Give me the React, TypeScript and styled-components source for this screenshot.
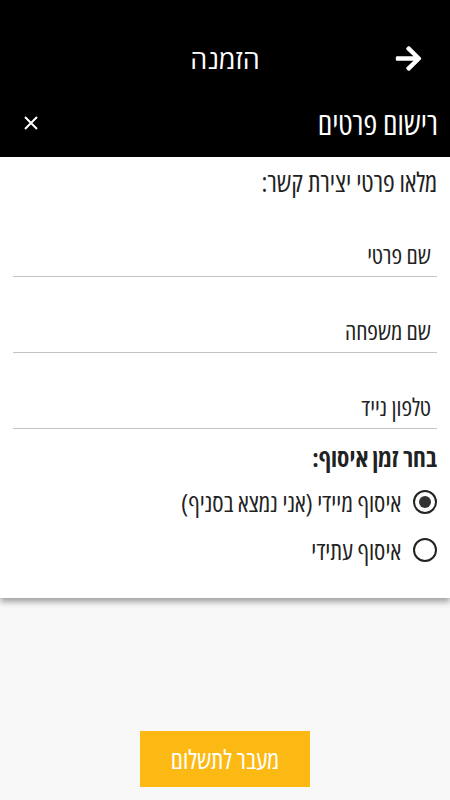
import React, { useState } from "react";
import styled, { createGlobalStyle } from "styled-components";
import { FaArrowRight } from "react-icons/fa";

const Global = createGlobalStyle`
  html, body { margin: 0; padding: 0; background: #f8f8f8; }
  body { font-family: "Open Sans", "DejaVu Sans", sans-serif; font-stretch: 75%; }
  * { box-sizing: border-box; }
`;

const Page = styled.div`
  direction: rtl;
  width: 450px;
  height: 800px;
  display: flex;
  flex-direction: column;
  background: #f8f8f8;
`;

const Header = styled.header`
  background: #000;
  color: #fff;
  height: 157px;
  display: flex;
  flex-direction: column;
`;

const TopBar = styled.div`
  height: 110px;
  display: grid;
  grid-template-columns: 84px 1fr 84px;
  align-items: center;
  padding-top: 12px;
`;

const Title = styled.h1`
  margin: 0;
  font-size: 27px;
  line-height: 32px;
  font-stretch: 100%;
  font-weight: 400;
  text-align: center;
`;

const IconButton = styled.button`
  background: none;
  border: none;
  color: #fff;
  padding: 0;
  display: flex;
  align-items: center;
  justify-content: center;
  cursor: pointer;
`;

const SubBar = styled.div`
  flex: 1;
  display: flex;
  align-items: center;
  justify-content: space-between;
  padding: 0 12px 16px 23px;
`;

const SubTitle = styled.h2`
  margin: 0;
  font-size: 31px;
  line-height: 36px;
  font-weight: 400;
`;

const Card = styled.section`
  background: #fff;
  padding: 14px 13px 24px 13px;
  box-shadow: 0 4px 6px rgba(0, 0, 0, 0.35);
  position: relative;
`;

const Lead = styled.p`
  margin: 0 0 46px;
  font-size: 26.5px;
  line-height: 22px;
  color: #222;
`;

const Field = styled.input`
  display: block;
  width: 100%;
  border: none;
  border-bottom: 1px solid #c4c4c4;
  font-family: inherit;
  font-stretch: 75%;
  font-size: 24px;
  color: #222;
  padding: 0 6px 7px;
  margin-bottom: 38px;
  height: 38px;
  outline: none;
  background: transparent;
  direction: rtl;
  &::placeholder { color: #222; opacity: 1; }
  &:last-of-type { margin-bottom: 0; }
`;

const Section = styled.div`
  margin-top: 15px;
`;

const SectionTitle = styled.h3`
  margin: 0 0 8px;
  font-size: 25px;
  line-height: 26px;
  font-weight: 700;
  color: #222;
`;

const RadioRow = styled.label`
  display: flex;
  align-items: center;
  gap: 12px;
  height: 48px;
  font-size: 25px;
  color: #222;
  cursor: pointer;
`;

const RadioCircle = styled.span<{ $checked: boolean }>`
  flex: none;
  width: 24px;
  height: 24px;
  border-radius: 50%;
  border: 2px solid #222;
  display: flex;
  align-items: center;
  justify-content: center;
  &::after {
    content: "";
    width: 12px;
    height: 12px;
    border-radius: 50%;
    background: #333;
    display: ${(p) => (p.$checked ? "block" : "none")};
  }
`;

const Footer = styled.div`
  flex: 1;
  display: flex;
  align-items: flex-end;
  justify-content: center;
  padding-bottom: 13px;
`;

const PayButton = styled.button`
  width: 170px;
  height: 56px;
  background: #fdb913;
  color: #fff;
  border: none;
  font-family: inherit;
  font-stretch: 75%;
  font-size: 26px;
  cursor: pointer;
`;

export default function App() {
  const [pickup, setPickup] = useState("now");
  const options = [
    { id: "now", label: "איסוף מיידי (אני נמצא בסניף)" },
    { id: "later", label: "איסוף עתידי" },
  ];
  return (
    <Page>
      <Global />
      <Header>
        <TopBar>
          <IconButton aria-label="חזרה">
            <FaArrowRight size={29} />
          </IconButton>
          <Title>הזמנה</Title>
          <span />
        </TopBar>
        <SubBar>
          <SubTitle>רישום פרטים</SubTitle>
          <IconButton aria-label="סגור">
            <svg width="16" height="16" viewBox="0 0 16 16">
              <path d="M2 2 L14 14 M14 2 L2 14" stroke="#fff" strokeWidth="2" />
            </svg>
          </IconButton>
        </SubBar>
      </Header>
      <Card>
        <Lead>מלאו פרטי יצירת קשר:</Lead>
        <Field placeholder="שם פרטי" />
        <Field placeholder="שם משפחה" />
        <Field placeholder="טלפון נייד" />
        <Section>
          <SectionTitle>בחר זמן איסוף:</SectionTitle>
          {options.map((o) => (
            <RadioRow key={o.id} onClick={() => setPickup(o.id)}>
              <RadioCircle $checked={pickup === o.id} />
              {o.label}
            </RadioRow>
          ))}
        </Section>
      </Card>
      <Footer>
        <PayButton>מעבר לתשלום</PayButton>
      </Footer>
    </Page>
  );
}
